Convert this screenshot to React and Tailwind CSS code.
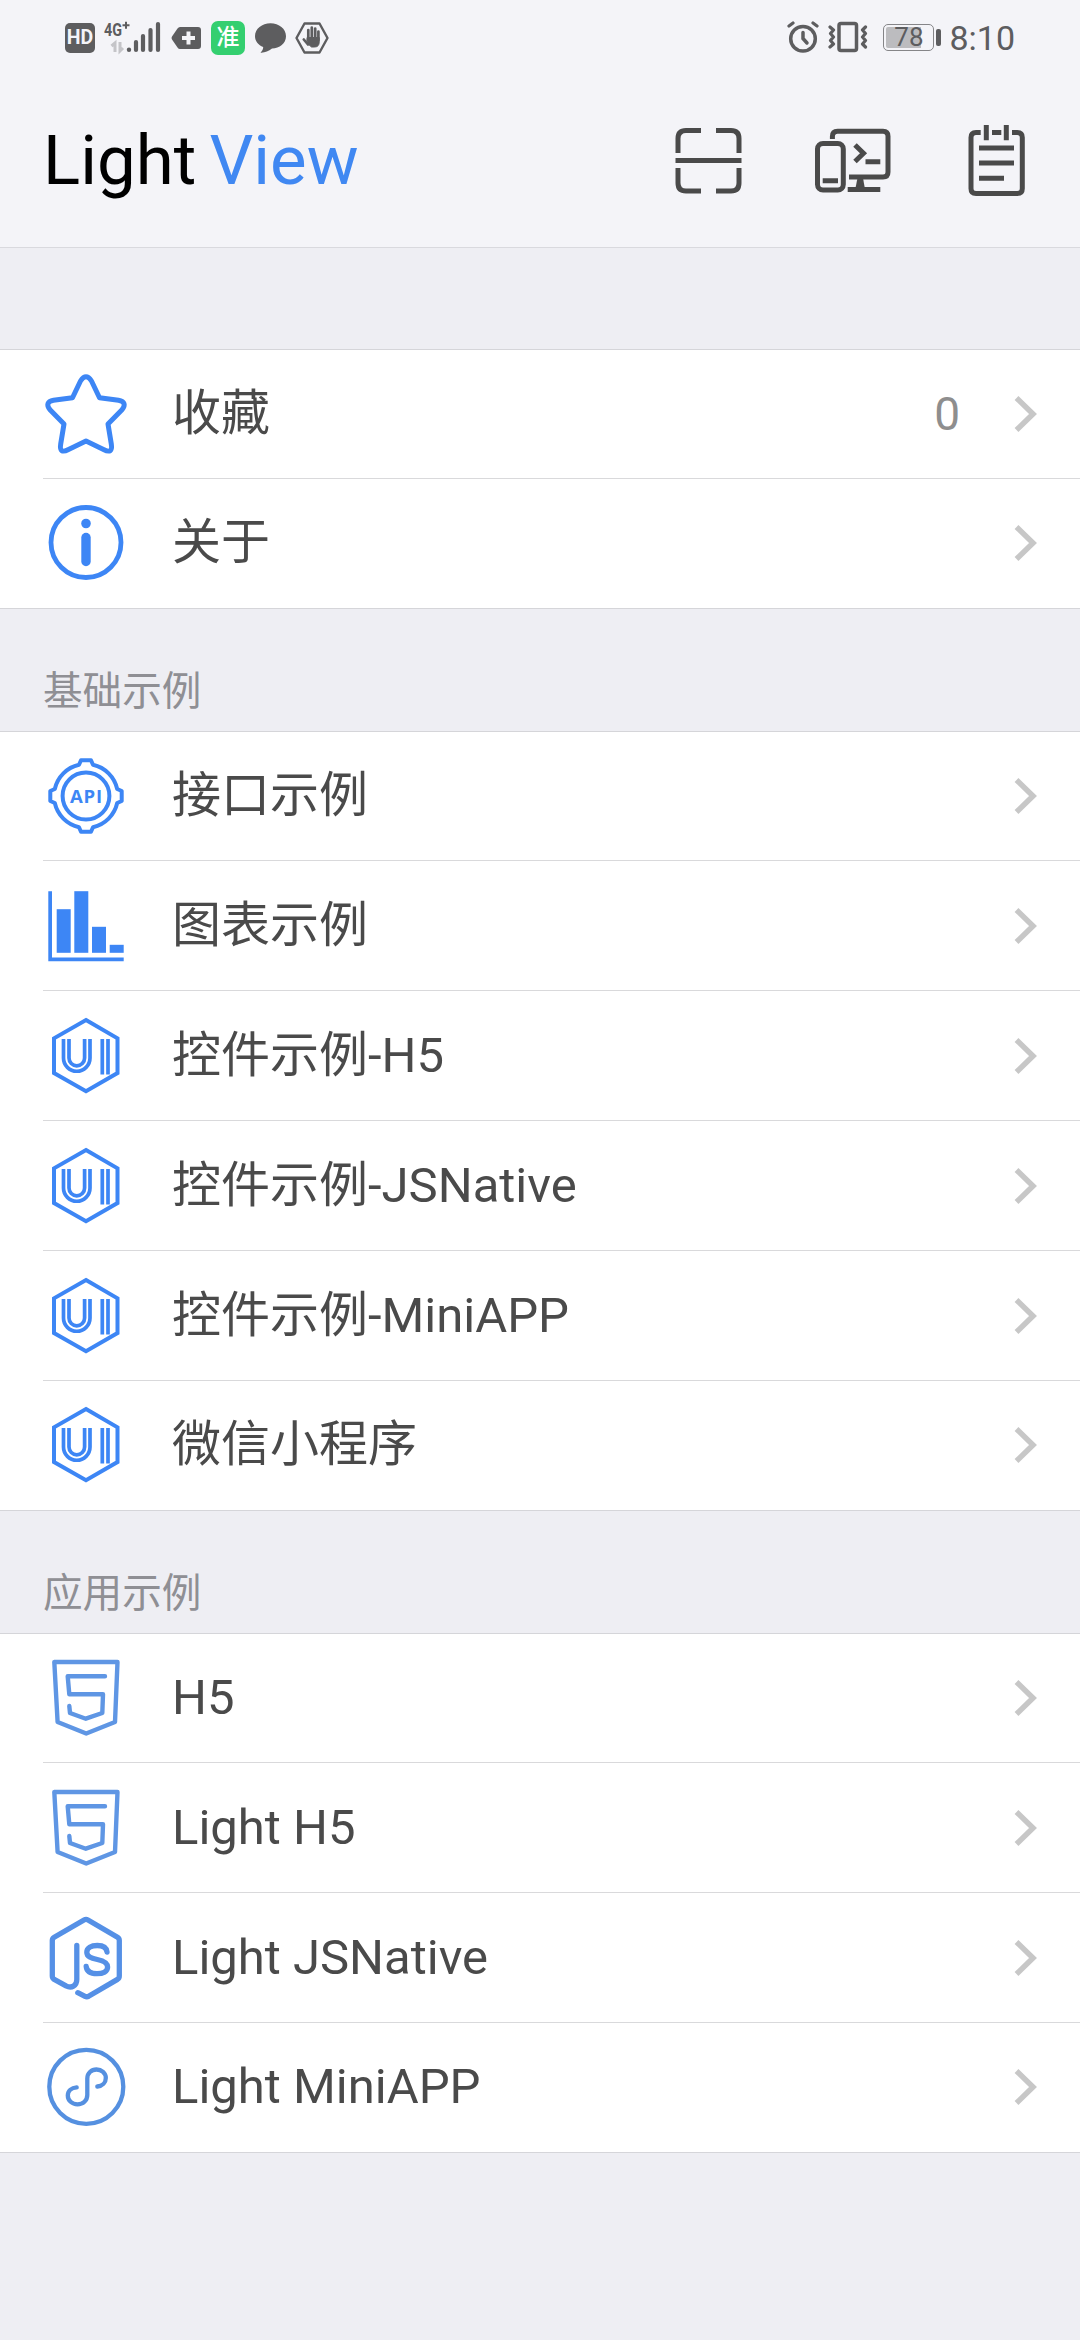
import React from 'react'

const groups = [
  {
    title: '',
    items: [
      { label: '收藏', icon: StarIcon, count: 0 },
      { label: '关于', icon: InfoIcon },
    ],
  },
  {
    title: '基础示例',
    items: [
      { label: '接口示例', icon: ApiIcon },
      { label: '图表示例', icon: ChartIcon },
      { label: '控件示例-H5', icon: UiIcon },
      { label: '控件示例-JSNative', icon: UiIcon },
      { label: '控件示例-MiniAPP', icon: UiIcon },
      { label: '微信小程序', icon: UiIcon },
    ],
  },
  {
    title: '应用示例',
    items: [
      { label: 'H5', icon: Html5Icon },
      { label: 'Light H5', icon: Html5Icon },
      { label: 'Light JSNative', icon: JsIcon },
      { label: 'Light MiniAPP', icon: MiniAppIcon },
    ],
  },
]

function RowSvg({ color = '#3d86f5', width = 4, children }) {
  return (
    <svg className="w-[86px] h-[86px] shrink-0" viewBox="0 0 86 86" fill="none" stroke={color} strokeWidth={width} strokeLinecap="round" strokeLinejoin="round">
      {children}
    </svg>
  )
}

function StarIcon() {
  return (
    <RowSvg width={5}>
      <path d="M37.5 10Q43 1.5 48.5 10L56.5 26.8L75.5 29.3Q84.8 31 79 38.8L65 53L68.3 73Q70 83.5 60.5 78.5L43 70L25.5 78.5Q16 83.5 17.7 73L21 53L7 38.8Q1.2 31 10.5 29.3L29.5 26.8Z" />
    </RowSvg>
  )
}

function InfoIcon() {
  return (
    <RowSvg width={4.8}>
      <circle cx="43" cy="42.5" r="35" />
      <circle cx="43" cy="23.5" r="4.8" fill="#3d86f5" stroke="none" />
      <path d="M43 37.5V61.5" strokeWidth="9.4" />
    </RowSvg>
  )
}

function ApiIcon() {
  return (
    <RowSvg width={4}>
      <path d="M36 11.8L38 7.3H48L50 11.8A32 32 0 0 1 74.2 36L78.7 38V48L74.2 50A32 32 0 0 1 50 74.2L48 78.7H38L36 74.2A32 32 0 0 1 11.8 50L7.3 48V38L11.8 36A32 32 0 0 1 36 11.8Z" />
      <circle cx="43" cy="43" r="23.4" />
      <text x="43" y="50" textAnchor="middle" textLength="32" fill="#3d86f5" stroke="none" className="font-['Open_Sans',sans-serif] text-[18.5px] font-bold">API</text>
    </RowSvg>
  )
}

function ChartIcon() {
  return (
    <RowSvg>
      <g fill="#3d86f5" stroke="none">
        <path d="M5.3 8.2H9V74.4H80.7V78.2H5.3Z" />
        <rect x="13.7" y="26.2" width="14" height="43.6" />
        <rect x="31.3" y="8.2" width="14" height="61.6" />
        <rect x="49" y="43.8" width="14" height="26" />
        <rect x="66.7" y="61.8" width="14" height="8" />
      </g>
    </RowSvg>
  )
}

function UiIcon() {
  return (
    <RowSvg width={4}>
      <path d="M43 7L74.5 25.3V60L43 78.3L11 60V25.3Z" strokeLinejoin="miter" />
      <g strokeWidth="3.7" strokeLinecap="butt">
        <path d="M20.5 26V45A13.2 13.2 0 0 0 47 45V26" />
        <path d="M26 26V45A7.8 7.8 0 0 0 41.6 45V26" />
        <path d="M59.3 26V61.5M65 26V61.5" />
      </g>
    </RowSvg>
  )
}

function Html5Icon() {
  return (
    <RowSvg color="#5f96e4" width={4.4}>
      <path d="M11.3 7H74.5L72 67L43.2 78.5L14.6 67Z" />
      <path d="M62 21.3H24.7L26.3 39.3H60L59.3 58L42.8 63.7L27 58L26.3 51" />
    </RowSvg>
  )
}

function JsIcon() {
  return (
    <RowSvg color="#5590e6" width={5.3}>
      <path d="M34.8 77.7L42 81.3Q43.8 82.2 45.6 81.3L74.5 64.4Q76.3 63.2 76.3 61V25.5Q76.3 23.3 74.5 22.2L45 5Q43 3.8 41 5L11.2 22.2Q9.3 23.3 9.3 25.5V61Q9.3 63.2 11.2 64.4L23 70.8C28.5 73.6 33.8 71 33.8 64.5V30.5" />
      <path d="M64 37C63.5 32.5 59.5 30.5 54.3 30.5C48 30.5 43.8 32.7 43.8 37.2C43.8 41.8 48 43.2 54.3 44.5C61 45.9 64.6 47.7 64.6 52C64.6 56.7 60 58.7 54 58.7C47.5 58.7 43.7 56.4 43.2 51.5" />
    </RowSvg>
  )
}

function MiniAppIcon() {
  return (
    <RowSvg color="#5590e0" width={4.3}>
      <circle cx="43.3" cy="42.8" r="37" />
      <path d="M54.3 42.5C59.5 42 62.8 38.5 62.8 34C62.8 29 58.5 25.5 53.5 25.5C48.3 25.5 44.3 29 44.3 34.5V51C44.3 56.5 40 60.3 34.5 60.3C29 60.3 24.8 56.5 24.8 51.5C24.8 47 28.5 43.7 33.7 43.3" />
    </RowSvg>
  )
}

function StatusBar() {
  return (
    <div className="h-[75px] flex items-start justify-between pl-[65px] pr-[65px] text-[#5d5d5f]">
      <div className="flex items-start pt-[18px]">
        <div className="mt-[5px] w-[30px] h-[30px] rounded-[5px] bg-[#5d5d5f] text-[#f4f4f8] text-[19.5px] leading-[30px] font-bold text-center">HD</div>
        <svg className="ml-[7px] w-[60px] h-10" viewBox="0 0 60 40" fill="currentColor">
          <text x="2" y="17.5" textLength="18" lengthAdjust="spacingAndGlyphs" className="text-[19px] font-bold">4G</text>
          <path d="M20.5 7.2H27.5M24 3.7V10.7" stroke="currentColor" strokeWidth="2" />
          <path d="M13 34V25L9.5 28M18 24V33L21 30" stroke="#c4c4c8" strokeWidth="3" fill="none" />
          <circle cx="27" cy="31.8" r="2.2" />
          <path d="M34 24V32M41 18V32M48.5 12V32M56 6V32" stroke="currentColor" strokeWidth="4.2" strokeLinecap="round" />
        </svg>
        <svg className="ml-[9px] w-[30px] h-10" viewBox="0 0 30 40">
          <path d="M9 9H27Q30 9 30 12V28Q30 31 27 31H9Q7.5 31 6.5 29.5L1 21.5Q0 20 1 18.5L6.5 10.5Q7.5 9 9 9Z" fill="currentColor" />
          <path d="M17.5 13.5V26.5M11 20H24" stroke="#f4f4f8" strokeWidth="4" />
        </svg>
        <div className="ml-[10px] mt-[3px] w-[34px] h-[34px] rounded-[7px] bg-[#34cf70] text-white text-[23px] leading-[33px] font-medium text-center">准</div>
        <svg className="ml-[10px] w-[31px] h-10" viewBox="0 0 31 40" fill="currentColor">
          <path d="M15.5 5.3C24 5.3 31 10.8 31 18.2C31 25.5 24.5 30 17 30.6C13.5 33.2 9.5 35 5.5 34.7C7.3 33 8.2 31 8.2 29C3.3 27 0 23 0 18.2C0 10.8 7 5.3 15.5 5.3Z" />
        </svg>
        <svg className="ml-[9px] w-[34px] h-10" viewBox="0 0 34 40" fill="none" stroke="currentColor" strokeLinecap="round" strokeLinejoin="round">
          <path d="M9.5 5.5H24.5L32.5 20L24.5 34.5H9.5L1.500 20Z" strokeWidth="2.4" />
          <path d="M13.3 22V12M16.8 20V9.5M20.2 20V10.5M23.4 22V13.5M8.8 21.5L13 26.5" strokeWidth="2.7" />
          <path d="M12.5 19.5H24.2V24Q24.2 29 19.5 29H16.5L12 25Z" fill="currentColor" strokeWidth="1" />
        </svg>
      </div>

      <div className="flex items-start pt-[18px]">
        <svg className="w-8 h-10" viewBox="0 0 32 40" fill="none" stroke="currentColor" strokeLinecap="round">
          <circle cx="16" cy="20.7" r="12.3" strokeWidth="3.5" />
          <path d="M16 14.5V20.5L20 25" strokeWidth="3.5" />
          <path d="M2 8L6 5M30 8L26 5" strokeWidth="3.2" />
        </svg>
        <svg className="ml-[9px] w-10 h-10" viewBox="0 0 40 40" fill="none" stroke="currentColor" strokeLinecap="round" strokeLinejoin="round">
          <rect x="11" y="5.5" width="17.5" height="27" rx="2" strokeWidth="3.5" />
          <path d="M2 9L5.5 12L2.5 15.5L5.5 19L2.5 22.5L5.5 26L2 29M37.5 9L34.5 12L37.5 15.5L34.5 19L37.500 22.5L34.5 26L37.5 29" strokeWidth="3.2" />
        </svg>
        <div className="ml-[15px] mt-[6px] w-[51px] h-[27px] rounded-[5px] border border-[#858588] p-0.5 relative">
          <div className="w-[35px] h-full bg-[#bcbcbf] rounded-l-[2px]"></div>
          <span className="absolute inset-0 text-center text-[26px] leading-[25px]">78</span>
        </div>
        <div className="ml-0.5 mt-[11px] w-[5px] h-[17px] rounded-[2px] bg-[#5d5d5f]"></div>
        <span className="ml-[8px] text-[34px] leading-[40px]">8:10</span>
      </div>
    </div>
  )
}

function Header() {
  return (
    <header className="h-[173px] flex items-center justify-between px-[43px] border-b border-[#d9d9de]">
      <h1 className="text-[69px] leading-[80px] text-black whitespace-nowrap">
        Light <span className="-ml-1 text-[#4088f2]">View</span>
      </h1>
      <div className="flex items-center text-[#4a4a4a]">
        <svg className="w-20 h-20" viewBox="0 0 80 80" fill="none" stroke="currentColor" strokeWidth="5">
          <path d="M33 9.5H18Q10 9.5 10 17.5V32M48 9.5H63Q71 9.5 71 17.5V32M10 47V62Q10 70 18 70H33M48 70H63Q71 70 71 62V47" />
          <path d="M7.5 39.5H73.5" />
        </svg>
        <svg className="ml-[65px] w-20 h-20" viewBox="0 0 80 80" fill="none" stroke="currentColor" strokeWidth="5">
          <path d="M19.4 18V15.5Q19.4 10.3 24.6 10.3H70Q75 10.3 75 15.3V51Q75 56 70 56H36" />
          <rect x="4.5" y="22.5" width="25.8" height="46.5" rx="5.5" />
          <path d="M9.7 59.8H25M52.5 40.7H67.3M34.7 68.6H67.3" />
          <path d="M42 24L50.5 32.3L42 40.5" />
          <path d="M44.5 57H50L51.8 67H42.5Z" fill="currentColor" stroke="none" />
        </svg>
        <svg className="ml-[64px] w-20 h-20" viewBox="0 0 80 80" fill="none" stroke="currentColor" strokeWidth="5">
          <path d="M23.7 11.6H19Q14 11.6 14 16.6V67.5Q14 72.5 19 72.5H60.3Q65.3 72.5 65.3 67.5V16.6Q65.3 11.6 60.3 11.6H55M35 11.6H44.3" />
          <path d="M29.3 4V19.3M49.3 4V19.3" />
          <path d="M22 27H57M22 42H57M22 57.3H47" />
        </svg>
      </div>
    </header>
  )
}

function Row({ item, first, last }) {
  const Icon = item.icon
  return (
    <div className={`pl-[43px] ${first ? 'h-[129px]' : 'h-[130px]'}`}>
      <div className={`h-full flex items-center pr-[42px] border-b ${last ? 'pb-0.5 border-transparent' : 'border-[#d9d9db]'}`}>
        <Icon />
        <span className="ml-[43px] flex-1 text-[49px] leading-[64px] text-[#4a4a4a] whitespace-nowrap">{item.label}</span>
        {item.count !== undefined && (
          <span className="mr-[54px] text-[46px] leading-[60px] text-[#8e8e8e]">{item.count}</span>
        )}
        <svg className="w-6 h-10 shrink-0" viewBox="0 0 24 40" fill="none" stroke="#c7c7c7" strokeWidth="5.5">
          <path d="M2.5 4L19 20L2.5 36" />
        </svg>
      </div>
    </div>
  )
}

export default function App() {
  return (
    <div className="w-[1080px] h-[2340px] overflow-hidden bg-[#eeeef3] font-['Roboto','Noto_Sans_CJK_SC',sans-serif]">
      <div className="bg-[#f4f4f8]">
        <StatusBar />
        <Header />
      </div>
      {groups.map((group, i) => (
        <section key={i}>
          <div className={`flex items-end pl-[43px] ${group.title ? 'h-[122px] pb-[9px]' : 'h-[101px]'}`}>
            <h2 className="text-[39.6px] leading-[60px] text-[#8f8f94]">{group.title}</h2>
          </div>
          <div className="bg-white border-t border-[#d5d5d9]">
            {group.items.map((item, j) => (
              <Row key={item.label} item={item} first={j === 0} last={j === group.items.length - 1} />
            ))}
            <div className="-mt-px h-px bg-[#d5d5d9] relative"></div>
          </div>
        </section>
      ))}
    </div>
  )
}
